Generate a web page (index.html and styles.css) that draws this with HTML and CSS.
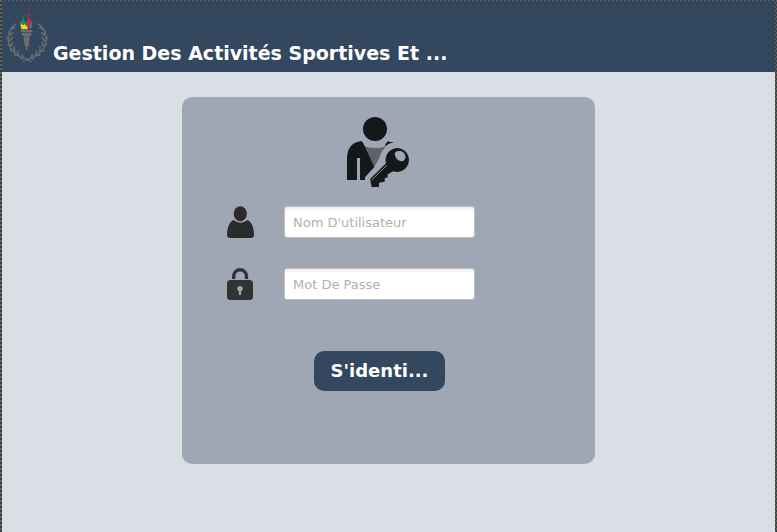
FILE: index.html
```
<!DOCTYPE html>
<html lang="fr">
<head>
<meta charset="utf-8">
<title>Gestion Des Activités Sportives</title>
<link rel="stylesheet" href="styles.css">
</head>
<body>
<div class="window">
  <header class="header">
    <svg class="logo" viewBox="18 18 132 174" aria-hidden="true">
      <g fill="none" stroke="#6c6d6d" stroke-width="5">
        <path stroke-dasharray="7 2" d="M49 71Q26 85 25 118Q27 158 75 176L94 184"/>
        <path stroke-dasharray="7 2" d="M114 71Q137 85 139 118Q136 158 88 176L69 184"/>
        <path stroke-width="4.5" d="M40 76l-5 14M33 87l13-5M26 94l7 12M29 106l10-9M21 112l8 12M29 123l9-12M22 132l13 8M34 139l3-14M30 151l15 4M43 153l0-14M42 165l15 2M56 166l-4-14M61 178l10-5M69 173l-3-11"/>
        <path stroke-width="4.5" d="M123 76l5 14M130 87l-13-5M137 94l-7 12M134 106l-10-9M142 112l-8 12M134 123l-9-12M141 132l-13 8M129 139l-3-14M133 151l-15 4M120 153l0-14M121 165l-15 2M107 166l4-14M102 178l-10-5M94 173l3-11"/>
      </g>
      <path fill="#6c6d6d" d="M63 90h34v6h-34zM66 98h28v6l-6 6h-16l-6-6zM71 112h18l-2 12v14h-4v12h-6v-12h-3z"/>
      <path fill="#f5cf28" d="M62 66l6 9 6-3 9 8v8H65l-3-8z"/>
      <path fill="#159448" d="M64 65l8-13v10l14 9-1 10-9-10-10 3zM69 49l5-7v6l-5 5z"/>
      <path fill="#e51e36" d="M82 55h9l-2 13 4-5v14l-5 9-6-17zM84 24h4v4h-4zM84 36h4v5h-4zM79 46h4v4h-4zM88 45h3v4h-3z"/>
      <path fill="#2c82bd" d="M94 60l3 9-2 14-6 5 3-14z"/>
    </svg>
    <h1 class="title">Gestion Des Activités Sportives Et ...</h1>
  </header>
  <main class="content">
    <form class="card">
      <svg class="hero" viewBox="0 0 255 255" aria-hidden="true">
        <path fill="#5d626b" d="M83 106Q85 120 120 120Q135 120 151 116L130 155 116 180Z"/>
        <path fill="#a0a7b4" d="M89 208L133 160Q134 122 165 112L185 111 215 150 170 195 110 225Z"/>
        <g fill="#15181a">
          <circle cx="120" cy="63" r="36"/>
          <path d="M36 216V150Q37 105 79 99L84 104 118 177 90 208V216H75V150H66V216Z"/>
          <path d="M151 109L159 99 164 102H177L160 108 151 116Z"/>
          <path fill-rule="evenodd" d="M186 120A36 36 0 1 1 174 190L158 199V208L149 211V221L132 224V237H110L105 213 153 166A36 36 0 0 1 186 120ZM185 130C174 134 181 157 198 160C217 161 216 132 196 129Z"/>
        </g>
        <path stroke="#a0a7b4" stroke-width="2.5" fill="none" d="M109 217L155 172"/>
      </svg>
      <div class="field">
        <svg class="icon" viewBox="0 0 28 33" aria-hidden="true">
          <ellipse cx="13.3" cy="7.8" rx="6.6" ry="7.5" fill="#2b2b2a"/>
          <path fill="#2b2b2a" d="M6.5 14Q13.5 19.5 20.5 14C25 16 27.3 23 27 29Q27 32 24 32H3Q0 32 0 29C0 23 2 16 6.5 14Z"/>
        </svg>
        <input class="input" type="text" placeholder="Nom D'utilisateur">
      </div>
      <div class="field">
        <svg class="icon" viewBox="0 0 28 33" aria-hidden="true">
          <path fill="none" stroke="#333" stroke-width="3.4" d="M6.7 11V8.3A6.4 6.6 0 0 1 19.5 8.3V11"/>
          <rect y="12" width="26" height="20" rx="3.5" fill="#333"/>
          <circle cx="13" cy="20.8" r="2.7" fill="#a0a7b4"/>
          <path fill="#a0a7b4" d="M12 22h2v5h-2z"/>
        </svg>
        <input class="input" type="password" placeholder="Mot De Passe">
      </div>
      <button class="submit" type="button">S'identi...</button>
    </form>
  </main>
</div>
</body>
</html>
```
FILE: styles.css
```
* {
  box-sizing: border-box;
}

body {
  margin: 0;
  font-family: "DejaVu Sans", sans-serif;
}

.window {
  display: flex;
  flex-direction: column;
  height: 532px;
  padding: 1px 2px 0;
  background: repeating-conic-gradient(#3b3c3c 0 25%, #62605c 0 50%) 0 0 / 4px 4px;
}

.header {
  display: flex;
  align-items: flex-start;
  height: 71px;
  padding: 5px 0 0 4px;
  background: #33475f;
}

.logo {
  width: 44px;
  height: 58px;
}

.title {
  margin: 35px 0 0 3px;
  font-size: 19px;
  line-height: 24px;
  color: #fff;
  white-space: nowrap;
}

.content {
  flex: 1;
  padding: 25px 180px 0;
  background: #dadfe6;
}

.card {
  display: flex;
  flex-direction: column;
  height: 367px;
  padding: 11px 45px 0;
  border-radius: 10px;
  background: #a0a7b4;
}

.hero {
  width: 85px;
  height: 85px;
  margin: 0 0 13px 108px;
}

.field {
  display: flex;
  align-items: flex-start;
  height: 32px;
  margin-bottom: 30px;
}

.icon {
  width: 28px;
  height: 33px;
  margin-right: 29px;
}

.input {
  width: 191px;
  height: 32px;
  padding: 0 8px;
  border: 1px solid #c0c0c0;
  border-radius: 3px;
  background: linear-gradient(#eee, #fff 4px);
  font: 13px "DejaVu Sans", sans-serif;
  outline: none;
}

.input::placeholder {
  color: #b0b0b0;
  opacity: 1;
}

.submit {
  width: 131px;
  height: 40px;
  margin: 21px 0 0 87px;
  padding: 0 0 1px;
  border: 0;
  border-radius: 10px;
  background: #33475f;
  font: bold 18px "DejaVu Sans", sans-serif;
  color: #fff;
}
```
